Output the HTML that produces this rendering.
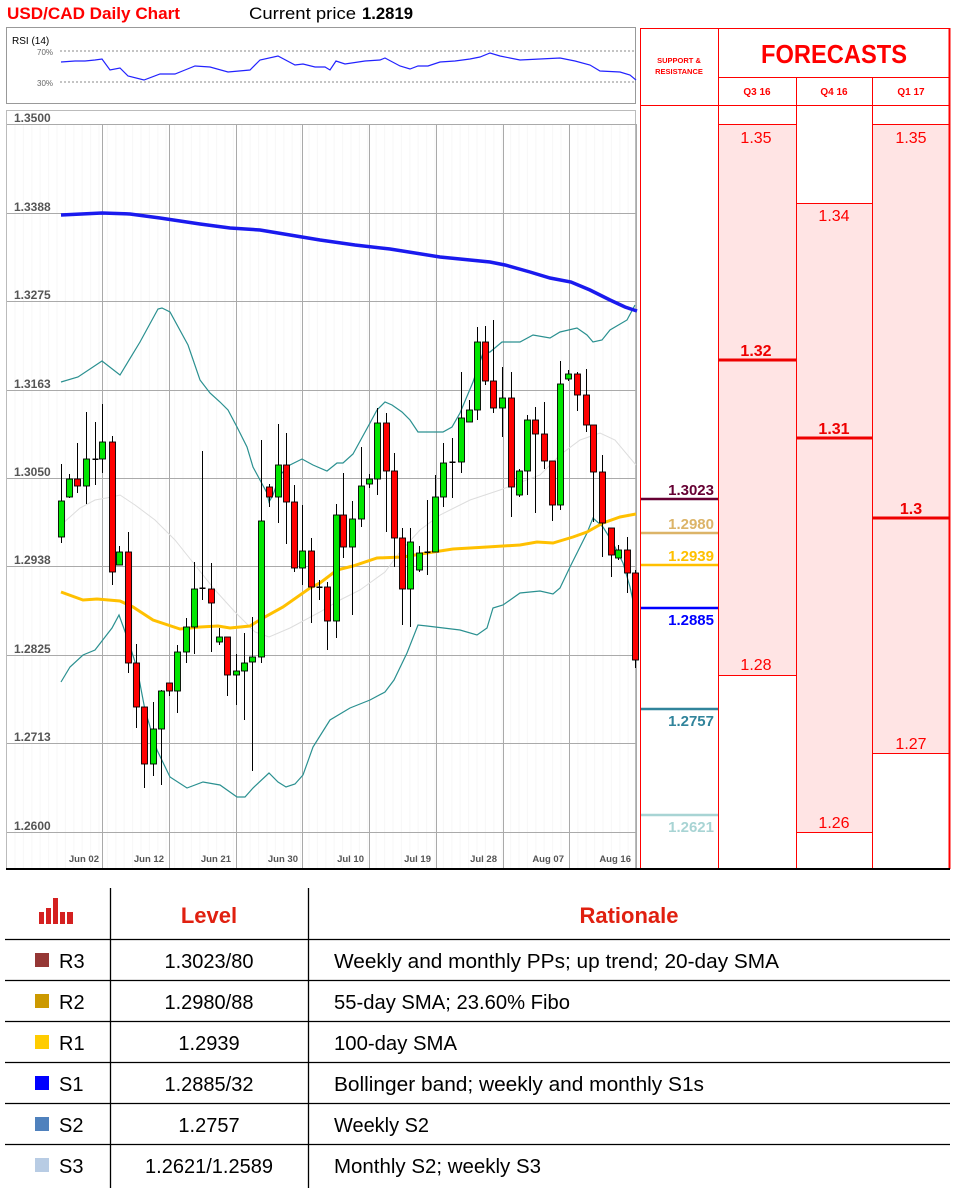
<!DOCTYPE html>
<html><head><meta charset="utf-8">
<style>
html,body{margin:0;padding:0;background:#fff;width:961px;height:1190px;overflow:hidden}
svg{display:block}
text{font-family:"Liberation Sans",sans-serif}
</style></head>
<body>
<svg id="s" width="961" height="1190" viewBox="0 0 961 1190" xmlns="http://www.w3.org/2000/svg">
<text x="7" y="19" font-size="17" font-weight="bold" fill="#ff0000" textLength="173" lengthAdjust="spacingAndGlyphs">USD/CAD Daily Chart</text>
<text x="249" y="19" font-size="17" fill="#000" textLength="107" lengthAdjust="spacingAndGlyphs">Current price</text>
<text x="362" y="19" font-size="17" font-weight="bold" fill="#000" textLength="51" lengthAdjust="spacingAndGlyphs">1.2819</text>

<rect x="6.5" y="27.5" width="629" height="76" fill="#fff" stroke="#999" stroke-width="1"/>
<text x="12" y="44" font-size="10" fill="#000">RSI (14)</text>
<text x="37" y="55" font-size="8" fill="#666">70%</text>
<text x="37" y="86" font-size="8" fill="#666">30%</text>
<line x1="60" y1="51" x2="636" y2="51" stroke="#888" stroke-dasharray="2,2"/>
<line x1="60" y1="82" x2="636" y2="82" stroke="#888" stroke-dasharray="2,2"/>
<polyline fill="none" stroke="#2222ff" stroke-width="1.2" points="61,62 75,61 85,61 95,60 102,59 110,70 120,68 128,76 144,80 160,74 175,74 185,70 195,66 210,67 228,72 250,70 260,60 278,56 295,65 303,64 315,67 325,67 330,70 336,61 345,64 365,61 380,60 385,58 400,66 410,69 418,66 428,66 440,62 455,61 470,59 480,57 490,53 500,56 520,60 540,59 560,58 575,61 590,65 600,71 620,72 630,75 636,80"/>

<rect x="6.5" y="110.5" width="629" height="758" fill="#fff" stroke="#bbb"/>
<g stroke="#f7f7f7" stroke-width="1" id="minor"></g>
<g stroke="#aaa" stroke-width="1">
<line x1="7" y1="124.5" x2="636" y2="124.5"/>
<line x1="7" y1="213.5" x2="636" y2="213.5"/>
<line x1="7" y1="301.5" x2="636" y2="301.5"/>
<line x1="7" y1="390.5" x2="636" y2="390.5"/>
<line x1="7" y1="478.5" x2="636" y2="478.5"/>
<line x1="7" y1="566.5" x2="636" y2="566.5"/>
<line x1="7" y1="655.5" x2="636" y2="655.5"/>
<line x1="7" y1="743.5" x2="636" y2="743.5"/>
<line x1="7" y1="832.5" x2="636" y2="832.5"/>
<line x1="102.5" y1="124" x2="102.5" y2="868"/>
<line x1="169.5" y1="124" x2="169.5" y2="868"/>
<line x1="236.5" y1="124" x2="236.5" y2="868"/>
<line x1="302.5" y1="124" x2="302.5" y2="868"/>
<line x1="369.5" y1="124" x2="369.5" y2="868"/>
<line x1="436.5" y1="124" x2="436.5" y2="868"/>
<line x1="503.5" y1="124" x2="503.5" y2="868"/>
<line x1="569.5" y1="124" x2="569.5" y2="868"/>
<line x1="636.5" y1="124" x2="636.5" y2="868"/>
</g>
<g font-size="12" fill="#555" font-weight="bold">
<text x="14" y="122">1.3500</text>
<text x="14" y="211">1.3388</text>
<text x="14" y="299">1.3275</text>
<text x="14" y="388">1.3163</text>
<text x="14" y="476">1.3050</text>
<text x="14" y="564">1.2938</text>
<text x="14" y="653">1.2825</text>
<text x="14" y="741">1.2713</text>
<text x="14" y="830">1.2600</text>
</g>
<g font-size="9.5" fill="#555" font-weight="bold" text-anchor="end">
<text x="99" y="862">Jun 02</text>
<text x="164" y="862">Jun 12</text>
<text x="231" y="862">Jun 21</text>
<text x="298" y="862">Jun 30</text>
<text x="364" y="862">Jul 10</text>
<text x="431" y="862">Jul 19</text>
<text x="497" y="862">Jul 28</text>
<text x="564" y="862">Aug 07</text>
<text x="631" y="862">Aug 16</text>
</g>

<polyline fill="none" stroke="#dddddd" stroke-width="1" points="61,525 80,508 95,500 112,497 120,495 135,505 155,520 175,540 195,565 215,590 235,612 255,632 269,637 290,628 320,612 340,600 360,590 385,572 400,552 420,530 440,515 470,500 500,490 540,475 560,455 580,440 600,433 615,440 636,465"/>
<polyline fill="none" stroke="#2a9090" stroke-width="1.2" points="61,382 78,377 102,361 120,375 140,342 158,309 162,308 170,312 188,345 200,380 210,393 220,402 228,410 237,427 247,447 253,467 260,480 267,493 269,502 273,495 280,475 290,465 302,459 313,465 327,471 337,463 343,463 353,454 370,423 377,410 385,402 392,405 402,412 410,420 418,432 433,432 443,432 452,427 460,413 473,382 483,353 490,352 502,342 520,342 533,335 550,338 560,332 577,328 587,335 593,342 602,340 610,330 627,320 635,305"/>
<polyline fill="none" stroke="#2a9090" stroke-width="1.2" points="61,682 70,667 83,655 95,650 112,628 119,615 127,637 137,668 145,710 157,750 170,777 187,788 203,782 220,785 237,797 245,797 253,788 269,773 278,782 286,787 295,784 303,775 313,747 330,720 350,708 370,700 385,692 394,680 407,653 418,625 427,626 460,630 477,635 487,628 493,608 503,605 520,593 540,591 553,594 560,588 570,567 587,533 593,518 603,527 613,543 623,563 630,587 635,610"/>
<polyline fill="none" stroke="#1a1aee" stroke-width="3.5" points="61,215 102,213 130,214 160,218 200,224 230,228 260,230 290,235 320,240 355,245 390,249 440,257 470,260 490,262 505,265 530,272 550,278 571,282 590,290 610,300 625,307 637,311"/>
<polyline fill="none" stroke="#ffc000" stroke-width="3" points="61,592 83,600 97,599 120,601 133,607 153,620 180,629 200,627 218,626 230,628 250,626 263,618 283,607 310,588 320,583 337,570 353,566 377,558 403,557 427,553 453,549 487,547 520,545 537,542 553,543 573,537 587,532 603,523 620,517 636,514"/>
<g id="candles"></g>

<rect x="718" y="124" width="78" height="551" fill="#ffe4e4"/>
<rect x="796" y="203" width="76" height="629" fill="#ffe4e4"/>
<rect x="872" y="124" width="78" height="629" fill="#ffe4e4"/>
<g stroke="#ff0000" stroke-width="1" fill="none">
<line x1="718" y1="124.5" x2="796" y2="124.5"/>
<line x1="718" y1="675.5" x2="796" y2="675.5"/>
<line x1="796" y1="203.5" x2="872" y2="203.5"/>
<line x1="796" y1="832.5" x2="872" y2="832.5"/>
<line x1="872" y1="124.5" x2="950" y2="124.5"/>
<line x1="872" y1="753.5" x2="950" y2="753.5"/>
<line x1="640.5" y1="28" x2="640.5" y2="869"/>
<line x1="718.5" y1="28" x2="718.5" y2="869"/>
<line x1="796.5" y1="77" x2="796.5" y2="869"/>
<line x1="872.5" y1="77" x2="872.5" y2="869"/>
<line x1="640" y1="28.5" x2="950" y2="28.5"/>
<line x1="718" y1="77.5" x2="950" y2="77.5"/>
<line x1="640" y1="105.5" x2="950" y2="105.5"/>
</g>
<line x1="949.5" y1="28" x2="949.5" y2="869" stroke="#ff0000" stroke-width="2"/>
<line x1="718" y1="360" x2="796" y2="360" stroke="#ee0000" stroke-width="3"/>
<line x1="796" y1="438" x2="872" y2="438" stroke="#ee0000" stroke-width="3"/>
<line x1="872" y1="518" x2="950" y2="518" stroke="#ee0000" stroke-width="3"/>
<text x="679" y="63" font-size="7.5" font-weight="bold" fill="#ff0000" text-anchor="middle">SUPPORT &amp;</text>
<text x="679" y="74" font-size="7.5" font-weight="bold" fill="#ff0000" text-anchor="middle">RESISTANCE</text>
<text x="834" y="63" font-size="26" font-weight="bold" fill="#ff0000" text-anchor="middle" textLength="146" lengthAdjust="spacingAndGlyphs">FORECASTS</text>
<g font-size="10" font-weight="bold" fill="#ff0000" text-anchor="middle">
<text x="757" y="95">Q3 16</text><text x="834" y="95">Q4 16</text><text x="911" y="95">Q1 17</text>
</g>
<g font-size="16" fill="#ff0000" text-anchor="middle">
<text x="756" y="143">1.35</text>
<text x="911" y="143">1.35</text>
<text x="834" y="221">1.34</text>
<text x="756" y="670">1.28</text>
<text x="834" y="828">1.26</text>
<text x="911" y="749">1.27</text>
</g>
<g font-size="16" font-weight="bold" fill="#ee0000" text-anchor="middle">
<text x="756" y="356">1.32</text>
<text x="834" y="434">1.31</text>
<text x="911" y="514">1.3</text>
</g>
<line x1="641" y1="499" x2="718" y2="499" stroke="#660033" stroke-width="2.5"/>
<line x1="641" y1="533" x2="718" y2="533" stroke="#dcb468" stroke-width="2.5"/>
<line x1="641" y1="565" x2="718" y2="565" stroke="#ffc000" stroke-width="2.5"/>
<line x1="641" y1="608" x2="718" y2="608" stroke="#0000ff" stroke-width="2.5"/>
<line x1="641" y1="709" x2="718" y2="709" stroke="#31849b" stroke-width="2.5"/>
<line x1="641" y1="815" x2="718" y2="815" stroke="#a8d4d4" stroke-width="2.5"/>
<g font-size="15" font-weight="bold" text-anchor="end">
<text x="714" y="495" fill="#660033">1.3023</text>
<text x="714" y="529" fill="#dcb468">1.2980</text>
<text x="714" y="561" fill="#ffc000">1.2939</text>
<text x="714" y="625" fill="#0000ff">1.2885</text>
<text x="714" y="726" fill="#31849b">1.2757</text>
<text x="714" y="832" fill="#a8d4d4">1.2621</text>
</g>
<line x1="6" y1="869" x2="950" y2="869" stroke="#000" stroke-width="2"/>

<g stroke="#000" stroke-width="1.3">
<line x1="110.5" y1="888" x2="110.5" y2="1188"/>
<line x1="308.5" y1="888" x2="308.5" y2="1188"/>
<line x1="5" y1="939.5" x2="950" y2="939.5"/>
<line x1="5" y1="980.5" x2="950" y2="980.5"/>
<line x1="5" y1="1021.5" x2="950" y2="1021.5"/>
<line x1="5" y1="1062.5" x2="950" y2="1062.5"/>
<line x1="5" y1="1103.5" x2="950" y2="1103.5"/>
<line x1="5" y1="1144.5" x2="950" y2="1144.5"/>
</g>
<g fill="#d42020">
<rect x="39" y="912" width="5" height="12"/>
<rect x="46" y="908" width="5" height="16"/>
<rect x="53" y="898" width="5" height="26"/>
<rect x="60" y="912" width="5" height="12"/>
<rect x="67" y="912" width="6" height="12"/>
</g>
<text x="209" y="923" font-size="22" font-weight="bold" fill="#e02010" text-anchor="middle">Level</text>
<text x="629" y="923" font-size="22" font-weight="bold" fill="#e02010" text-anchor="middle">Rationale</text>
<rect x="35" y="953" width="14" height="14" fill="#953735"/>
<rect x="35" y="994" width="14" height="14" fill="#cc9900"/>
<rect x="35" y="1035" width="14" height="14" fill="#ffcc00"/>
<rect x="35" y="1076" width="14" height="14" fill="#0000ff"/>
<rect x="35" y="1117" width="14" height="14" fill="#4f81bd"/>
<rect x="35" y="1158" width="14" height="14" fill="#b8cce4"/>
<g font-size="20" fill="#000">
<text x="59" y="968">R3</text>
<text x="59" y="1009">R2</text>
<text x="59" y="1050">R1</text>
<text x="59" y="1091">S1</text>
<text x="59" y="1132">S2</text>
<text x="59" y="1173">S3</text>
</g>
<g font-size="20" fill="#000" text-anchor="middle">
<text x="209" y="968">1.3023/80</text>
<text x="209" y="1009">1.2980/88</text>
<text x="209" y="1050">1.2939</text>
<text x="209" y="1091">1.2885/32</text>
<text x="209" y="1132">1.2757</text>
<text x="209" y="1173">1.2621/1.2589</text>
</g>
<g font-size="20" fill="#000">
<text x="334" y="968" textLength="445" lengthAdjust="spacingAndGlyphs">Weekly and monthly PPs; up trend; 20-day SMA</text>
<text x="334" y="1009" textLength="236" lengthAdjust="spacingAndGlyphs">55-day SMA; 23.60% Fibo</text>
<text x="334" y="1050" textLength="123" lengthAdjust="spacingAndGlyphs">100-day SMA</text>
<text x="334" y="1091" textLength="370" lengthAdjust="spacingAndGlyphs">Bollinger band; weekly and monthly S1s</text>
<text x="334" y="1132" textLength="95" lengthAdjust="spacingAndGlyphs">Weekly S2</text>
<text x="334" y="1173" textLength="207" lengthAdjust="spacingAndGlyphs">Monthly S2; weekly S3</text>
</g>
</svg>
<script>
(function(){
var NS="http://www.w3.org/2000/svg";
var g=document.getElementById("candles");
var m=document.getElementById("minor");
for(var x=15;x<636;x+=8.4){var l=document.createElementNS(NS,"line");l.setAttribute("x1",x);l.setAttribute("x2",x);l.setAttribute("y1",124);l.setAttribute("y2",868);m.appendChild(l);}
var c=[
[61,537,501,464,543],[69,497,479,474,498],[77,479,486,443,493],[86,486,459,412,504],[95,459,459,422,485],[102,459,442,404,473],
[112,442,572,436,585],[119,565,552,546,565],[128,552,663,532,673],[136,663,707,644,728],[144,707,764,707,788],[153,764,729,702,776],
[161,729,691,690,785],[169,683,691,683,696],[177,691,652,645,713],[186,652,627,618,663],[194,627,589,562,654],[202,588,588,451,600],
[211,589,603,563,652],[219,642,637,628,645],[227,637,675,637,696],[236,675,671,654,705],[244,671,663,633,720],[252,662,657,617,771],
[261,657,521,440,663],[269,487,497,484,507],[278,497,465,424,523],[286,465,502,433,544],[294,502,568,485,572],[302,568,551,505,585],
[311,551,587,538,623],[319,587,587,580,600],[327,587,621,582,650],[336,621,515,504,638],[343,515,547,473,558],[352,547,519,501,615],
[361,519,486,447,527],[369,484,479,474,488],[377,479,423,408,495],[386,423,471,413,532],[394,471,538,453,567],[402,538,589,528,625],
[410,589,542,528,627],[419,570,553,546,572],[427,552,552,500,575],[435,552,497,475,552],[443,497,463,443,507],[452,462,462,438,498],
[461,462,418,372,473],[469,422,410,400,422],[477,410,342,327,420],[485,342,381,326,385],[493,381,408,320,413],[502,408,398,367,437],
[511,398,487,372,517],[519,495,471,469,497],[527,471,420,415,495],[535,420,434,407,513],[544,434,461,402,469],[552,461,505,461,521],
[560,505,384,361,510],[568,379,374,370,381],[577,374,395,372,411],[586,395,425,369,432],[593,425,472,425,522],[602,472,523,455,557],
[611,528,555,528,577],[618,558,550,545,560],[627,550,573,537,593],[635,573,660,570,668]];
c.forEach(function(d){
 var x=d[0],o=d[1],cl=d[2],h=d[3],lo=d[4];
 var w=document.createElementNS(NS,"line");
 w.setAttribute("x1",x+0.5);w.setAttribute("x2",x+0.5);w.setAttribute("y1",h);w.setAttribute("y2",lo);
 w.setAttribute("stroke","#000");w.setAttribute("stroke-width","1");g.appendChild(w);
 var top=Math.min(o,cl),ht=Math.abs(o-cl);
 var r=document.createElementNS(NS,"rect");
 r.setAttribute("x",x-2.5);r.setAttribute("width",6);
 if(ht<1.5){r.setAttribute("y",top-0.5);r.setAttribute("height",1.5);r.setAttribute("fill","#000");}
 else{r.setAttribute("y",top);r.setAttribute("height",ht);r.setAttribute("fill",cl<o?"#00e600":"#ff0000");r.setAttribute("stroke","#000");r.setAttribute("stroke-width","0.9");}
 g.appendChild(r);
});
})();
</script>
</body></html>
